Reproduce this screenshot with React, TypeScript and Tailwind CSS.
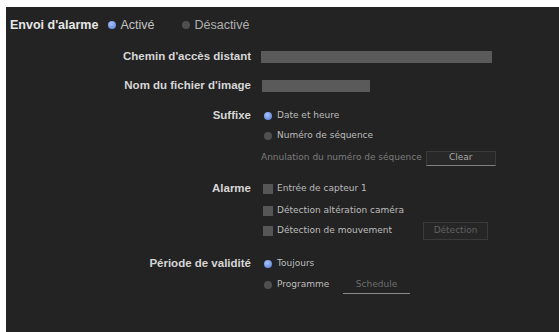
import React from "react";

const Radio = ({ on }: { on?: boolean }) =>
  on ? (
    <span className="inline-block w-[8px] h-[8px] rounded-full bg-[radial-gradient(circle_at_40%_35%,#a9c2f5,#4f78d8)] shrink-0" />
  ) : (
    <span className="inline-block w-[8px] h-[8px] rounded-full bg-[#4f4f4f] shrink-0" />
  );

const Check = () => <span className="inline-block w-[10px] h-[10px] bg-[#565656] shrink-0" />;

const lab =
  "h-[20px] flex justify-end items-center text-[11.5px] font-bold text-[#d6d6d6] [font-family:'Liberation_Sans',Arial,sans-serif] whitespace-nowrap";

const opt = "text-[9px] text-[#bdbdbd] [font-family:'DejaVu_Sans',Verdana,sans-serif] whitespace-nowrap";

export default function App() {
  return (
    <div className="w-[559px] h-[332px] bg-white pt-[7px] pl-[6px] overflow-hidden">
      <div className="w-[553px] h-[325px] bg-[#232323] flex flex-col">
        <div className="mt-[8px] h-[20px] flex items-center pl-[4px] [font-family:'Liberation_Sans',Arial,sans-serif] text-[12.5px]">
          <span className="font-bold text-[#e6e6e6]">Envoi d'alarme</span>
          <span className="ml-[10px]"><Radio on /></span>
          <span className="ml-[4px] text-[#c4c4c4]">Activé</span>
          <span className="ml-[28px]"><Radio /></span>
          <span className="ml-[4px] text-[#b0b0b0]">Désactivé</span>
        </div>

        <div className="grid grid-cols-[245px_1fr] gap-x-[10px]">
          <div className={lab + " mt-[12px]"}>Chemin d'accès distant</div>
          <div className="mt-[12px] h-[20px] flex items-center">
            <div className="w-[231px] h-[12px] bg-[#5a5a5a]" />
          </div>

          <div className={lab + " mt-[9px]"}>Nom du fichier d'image</div>
          <div className="mt-[9px] h-[20px] flex items-center">
            <div className="w-[108px] h-[12px] bg-[#5a5a5a] ml-[1px]" />
          </div>

          <div className={lab + " mt-[10px]"}>Suffixe</div>
          <div className="mt-[10px] flex flex-col">
            <div className="h-[20px] flex items-center pl-[3px] gap-[5px]"><Radio on /><span className={opt}>Date et heure</span></div>
            <div className="h-[19px] flex items-center pl-[3px] gap-[5px]"><Radio /><span className={opt}>Numéro de séquence</span></div>
            <div className="mt-[3px] h-[20px] flex items-center">
              <span className="text-[9px] text-[#7c7c7c] [font-family:'DejaVu_Sans',Verdana,sans-serif] whitespace-nowrap">Annulation du numéro de séquence</span>
              <div className="ml-[4px] w-[70px] h-[15px] bg-[#282828] border border-[#3a3a3a] border-b-[#808080] flex items-center justify-center text-[9px] text-[#a8a8a8] [font-family:'DejaVu_Sans',Verdana,sans-serif]">Clear</div>
            </div>
          </div>

          <div className={lab + " mt-[11px]"}>Alarme</div>
          <div className="mt-[11px] flex flex-col">
            <div className="h-[20px] flex items-center pl-[2px] gap-[4px]"><Check /><span className={opt}>Entrée de capteur 1</span></div>
            <div className="mt-[2px] h-[20px] flex items-center pl-[2px] gap-[4px]"><Check /><span className={opt}>Détection altération caméra</span></div>
            <div className="h-[20px] flex items-center pl-[2px]">
              <Check /><span className={opt + " ml-[4px] w-[146px]"}>Détection de mouvement</span>
              <div className="w-[65px] h-[18px] bg-[#262626] border border-[#3a3a3a] flex items-center justify-center text-[9px] text-[#606060] [font-family:'DejaVu_Sans',Verdana,sans-serif]">Détection</div>
            </div>
          </div>

          <div className={lab + " mt-[13px]"}>Période de validité</div>
          <div className="mt-[13px] flex flex-col">
            <div className="h-[20px] flex items-center pl-[3px] gap-[5px]"><Radio on /><span className={opt}>Toujours</span></div>
            <div className="mt-[1px] h-[20px] flex items-center pl-[3px]">
              <Radio /><span className={opt + " ml-[5px] w-[66px]"}>Programme</span>
              <div className="w-[67px] h-[17px] border-b border-[#8a8a8a] flex items-center justify-center text-[9px] text-[#6e6e6e] [font-family:'DejaVu_Sans',Verdana,sans-serif]">Schedule</div>
            </div>
          </div>
        </div>
      </div>
    </div>
  );
}
